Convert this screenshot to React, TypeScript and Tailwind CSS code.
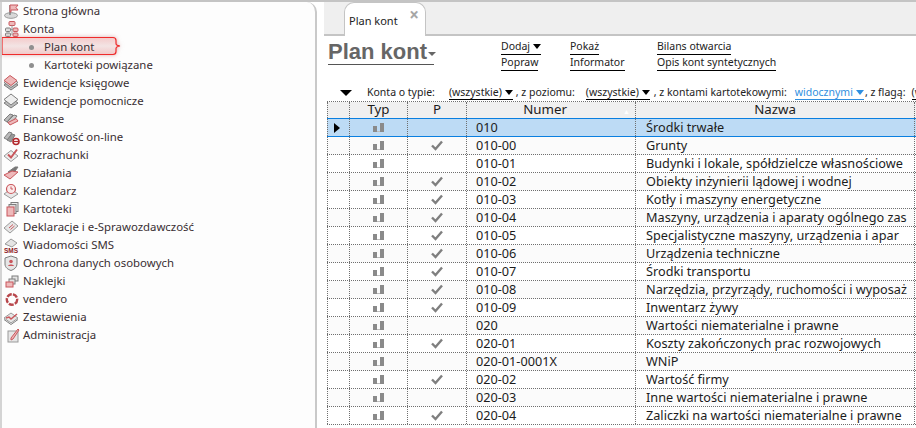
import type { ReactNode } from 'react'

const FONT = "font-['Noto_Sans','Open_Sans',sans-serif]"

function Svg({ children }: { children: ReactNode }) {
  return (
    <svg viewBox="0 0 18 18" className="h-[18px] w-[18px] shrink-0">
      {children}
    </svg>
  )
}

const G = '#9a9a9a'
const D = '#7d7d7d'
const R = '#c9575c'
const P = '#eeb9ba'

const icons: Record<string, ReactNode> = {
  home: (
    <Svg>
      <ellipse cx="9" cy="13.5" rx="6.5" ry="2.8" fill="#d8d8d8" stroke={G} />
      <path d="M8 13V3" stroke={D} strokeWidth="1.4" />
      <path d="M8 3h8l-2 2.5 2 2.5H9v2H8z" fill={P} stroke={R} />
    </Svg>
  ),
  accounts: (
    <Svg>
      <rect x="7" y="1.5" width="6" height="4" rx="1" fill={P} stroke={R} />
      <rect x="3.500" y="8" width="5" height="3.500" rx="1" fill="#ddd" stroke={D} />
      <rect x="3.500" y="13" width="5" height="3.500" rx="1" fill="#ddd" stroke={D} />
      <rect x="11" y="8" width="5" height="3.500" rx="1" fill={P} stroke={R} />
      <rect x="11" y="13" width="5" height="3.500" rx="1" fill={P} stroke={R} />
      <path d="M10 5.500V15M8.500 9.500H11" stroke={G} />
    </Svg>
  ),
  bookRed: (
    <Svg>
      <path d="M2 11l7-5 7 5-7 5z" fill="#bbb" stroke={D} />
      <path d="M2 8.500l7-5 7 5-7 5z" fill="#ddd" stroke={D} />
      <path d="M2 6.500l6-5 7 5-6 5z" fill={P} stroke={R} />
    </Svg>
  ),
  bookGray: (
    <Svg>
      <path d="M2 11l7-5 7 5-7 5z" fill="#bbb" stroke={D} />
      <path d="M2 7.500l7-5.500 7 5.500-7 5.500z" fill="#eee" stroke={D} />
    </Svg>
  ),
  money: (
    <Svg>
      <path d="M2 10l6-6 3 1-6 7z" fill="#bbb" stroke={D} />
      <path d="M5 12l7-7 3 1-6 8z" fill="#ccc" stroke={D} />
      <path d="M6 12.500l8-4 2 2.500-8 4z" fill={P} stroke={R} />
    </Svg>
  ),
  bank: (
    <Svg>
      <path d="M2 10l5-6 3 1-4 7z" fill="#bbb" stroke={D} />
      <path d="M5 12l5-6 3 1-4 7z" fill="#999" stroke={D} />
      <circle cx="14" cy="13.500" r="3" fill="none" stroke="#b3282d" strokeWidth="1.600" />
      <path d="M11.500 13.500h5" stroke="#b3282d" strokeWidth="1.200" />
    </Svg>
  ),
  settle: (
    <Svg>
      <path d="M2 10l7-5.500 7 5.500-7 5.500z" fill="#eee" stroke={G} />
      <path d="M6 8.500l3 3 6-8" fill="none" stroke={R} strokeWidth="2" />
    </Svg>
  ),
  actions: (
    <Svg>
      <path d="M6 8l7-5h3l-5 7z" fill="#777" stroke={D} />
      <path d="M2 11l8-4 6 1-8 7z" fill={P} stroke={R} />
    </Svg>
  ),
  calendar: (
    <Svg>
      <path d="M2 12l7-5 7 5-7 4.500z" fill="#e8e8e8" stroke={G} />
      <circle cx="9" cy="7" r="4.500" fill="#fbe9e9" stroke={R} strokeWidth="1.200" />
      <path d="M9 4.500V7h2" fill="none" stroke={R} />
    </Svg>
  ),
  cards: (
    <Svg>
      <rect x="9" y="2.500" width="7" height="9" fill="#eee" stroke={D} />
      <rect x="7" y="4.500" width="7" height="9" fill="#ddd" stroke={D} />
      <rect x="5" y="7" width="7" height="9" fill={P} stroke={R} />
    </Svg>
  ),
  declaration: (
    <Svg>
      <path d="M2 10l8-7 6 5-8 7z" fill="#e6e6e6" stroke={G} />
      <path d="M7 10l4-3.500M8.500 11.500l4-3.500" stroke={R} />
    </Svg>
  ),
  sms: (
    <Svg>
      <path d="M3 8l6-5 6 4-5 4z" fill="#e4e4e4" stroke={G} />
      <text x="9" y="16.500" textAnchor="middle" fontSize="6.500" fontWeight="700" fill="#8e2227" fontFamily="Liberation Sans">SMS</text>
    </Svg>
  ),
  shield: (
    <Svg>
      <path d="M9 2l6 2v6c0 3.500-3 5.500-6 6.500-3-1-6-3-6-6.500V4z" fill="#e6e6e6" stroke={D} />
      <circle cx="9" cy="7.500" r="1.800" fill={R} />
      <path d="M6 12c.5-2 5.500-2 6 0z" fill={R} />
    </Svg>
  ),
  labels: (
    <Svg>
      <rect x="10" y="4" width="6" height="5" fill="#e4e4e4" stroke={D} />
      <rect x="7" y="7" width="6" height="5" fill="#e4e4e4" stroke={D} />
      <rect x="4" y="10" width="7" height="5" fill={P} stroke={R} />
    </Svg>
  ),
  vendero: (
    <Svg>
      <circle cx="10" cy="9.500" r="5.200" fill="none" stroke="#b8474c" strokeWidth="2.400" strokeDasharray="5 1.200" />
    </Svg>
  ),
  report: (
    <Svg>
      <path d="M2 10l7-5 7 5-7 5z" fill="#e6e6e6" stroke={G} />
      <path d="M2 11.500l7 5 7-5" fill="none" stroke={D} />
      <path d="M4 10l3-1 2 2 6-5" fill="none" stroke={R} strokeWidth="1.500" />
    </Svg>
  ),
  admin: (
    <Svg>
      <rect x="6" y="5" width="10" height="11" fill="#e6e6e6" stroke={G} />
      <path d="M9 12l7-9 1 1-6 9-2 1z" fill={P} stroke={R} />
    </Svg>
  ),
}

const menu: { label: string; icon?: string; sub?: boolean; active?: boolean }[] = [
  { label: 'Strona główna', icon: 'home' },
  { label: 'Konta', icon: 'accounts' },
  { label: 'Plan kont', sub: true, active: true },
  { label: 'Kartoteki powiązane', sub: true },
  { label: 'Ewidencje księgowe', icon: 'bookRed' },
  { label: 'Ewidencje pomocnicze', icon: 'bookGray' },
  { label: 'Finanse', icon: 'money' },
  { label: 'Bankowość on-line', icon: 'bank' },
  { label: 'Rozrachunki', icon: 'settle' },
  { label: 'Działania', icon: 'actions' },
  { label: 'Kalendarz', icon: 'calendar' },
  { label: 'Kartoteki', icon: 'cards' },
  { label: 'Deklaracje i e-Sprawozdawczość', icon: 'declaration' },
  { label: 'Wiadomości SMS', icon: 'sms' },
  { label: 'Ochrona danych osobowych', icon: 'shield' },
  { label: 'Naklejki', icon: 'labels' },
  { label: 'vendero', icon: 'vendero' },
  { label: 'Zestawienia', icon: 'report' },
  { label: 'Administracja', icon: 'admin' },
]

const rows: [string, string, boolean][] = [
  ['010', 'Środki trwałe', false],
  ['010-00', 'Grunty', true],
  ['010-01', 'Budynki i lokale, spółdzielcze własnościowe', false],
  ['010-02', 'Obiekty inżynierii lądowej i wodnej', true],
  ['010-03', 'Kotły i maszyny energetyczne', true],
  ['010-04', 'Maszyny, urządzenia i aparaty ogólnego zas', true],
  ['010-05', 'Specjalistyczne maszyny, urządzenia i apar', true],
  ['010-06', 'Urządzenia techniczne', true],
  ['010-07', 'Środki transportu', true],
  ['010-08', 'Narzędzia, przyrządy, ruchomości i wyposaż', true],
  ['010-09', 'Inwentarz żywy', true],
  ['020', 'Wartości niematerialne i prawne', false],
  ['020-01', 'Koszty zakończonych prac rozwojowych', true],
  ['020-01-0001X', 'WNiP', false],
  ['020-02', 'Wartość firmy', true],
  ['020-03', 'Inne wartości niematerialne i prawne', false],
  ['020-04', 'Zaliczki na wartości niematerialne i prawne', true],
]

function MenuRow({ item }: { item: (typeof menu)[number] }) {
  if (item.sub) {
    return (
      <div className="relative flex h-[18px] items-center pl-[27px] text-[11.4px] text-[#3a2f33]">
        {item.active && (
          <svg viewBox="0 0 124 22" className="absolute left-0 top-[-3px] h-[22px] w-[124px] drop-shadow-[0_0_2px_rgba(200,120,120,0.6)]">
            <defs>
              <linearGradient id="glow" x1="0" x2="0" y1="0" y2="1">
                <stop offset="0" stopColor="#f4caca" />
                <stop offset="0.5" stopColor="#f3e4e4" />
                <stop offset="1" stopColor="#f2c8c8" />
              </linearGradient>
            </defs>
            <path d="M0 2.500H111q3 0 3 3v3q0 2 4 2.500q-4 .5-4 2.500v3q0 3-3 3H0z" fill="url(#glow)" stroke="#ef2b2b" strokeWidth="1.200" />
          </svg>
        )}
        <span className="relative h-[5px] w-[5px] rounded-full bg-[#8f8f8f]" />
        <span className="relative ml-[10px]">{item.label}</span>
      </div>
    )
  }
  return (
    <div className="flex h-[18px] items-center text-[11.4px] text-[#3a2f33]">
      <span className="flex w-[21px] shrink-0">{item.icon && icons[item.icon]}</span>
      <span>{item.label}</span>
    </div>
  )
}

function Drop({ blue }: { blue?: boolean }) {
  return (
    <span
      className={`ml-[3px] inline-block h-0 w-0 border-x-[4.5px] border-t-[5px] border-x-transparent ${
        blue ? 'border-t-[#2f8fe0]' : 'border-t-black'
      }`}
    />
  )
}

function Link({ children }: { children: ReactNode }) {
  return <span className="inline-flex h-[16px] items-center self-start border-b border-black text-[10.5px] leading-none text-[#222]">{children}</span>
}

function Bars() {
  return (
    <svg viewBox="0 0 11 9" className="h-[9px] w-[11px]">
      <rect x="0" y="3" width="4" height="6" fill="#8a8a8a" />
      <rect x="4" y="8" width="3" height="1" fill="#bdbdbd" />
      <rect x="7" y="0" width="4" height="9" fill="#8a8a8a" />
    </svg>
  )
}

function Check() {
  return (
    <svg viewBox="0 0 12 11" className="h-[11px] w-[12px]">
      <path d="M1 5.500l3.500 3.500L11 1.500" fill="none" stroke="#7f7f7f" strokeWidth="2.400" />
    </svg>
  )
}

const COLS = 'grid grid-cols-[22px_58px_59px_169px_279px_1fr]'
const CELL = 'flex items-center border-l border-dotted border-[#6f6f6f]'

export default function App() {
  return (
    <div className={`flex h-[428px] w-[916px] overflow-hidden border-t-2 border-[#c4c4c4] bg-white ${FONT}`}>
      <nav className="h-full w-[317px] shrink-0 rounded-tr-[10px] border-x-2 border-l-[#d4d4d4] border-r-[#c9c9c9] bg-[#fdfdfd]">
        {menu.map((item) => (
          <MenuRow key={item.label} item={item} />
        ))}
      </nav>

      <main className="ml-[7px] flex min-w-0 flex-1 flex-col">
        <div className="flex h-[34px] shrink-0 items-end border-b-2 border-[#c4c4c4] bg-[#efefef] pl-[20px]">
          <div className="-mb-[2px] flex h-[34px] w-[82px] items-center justify-between rounded-t-[10px] border-x border-t border-[#c4c4c4] bg-white pl-[4px] pr-[6px] text-[11px] text-[#222]">
            <span className="pt-[3px]">Plan kont</span>
            <span className="mb-[10px] text-[17px] font-bold leading-none text-[#a6a6a6]">×</span>
          </div>
        </div>

        <div className="flex h-[47px] shrink-0 pl-[4px] pt-[3px]">
          <div className="mt-[1px] flex h-[25px] w-[106px] items-center whitespace-nowrap border-b border-[#555] font-['Liberation_Sans'] text-[22px] font-bold leading-none text-[#666]">
            Plan kont
            <span className="ml-[1px] mt-[3px] h-0 w-0 border-x-[4px] border-t-[4px] border-x-transparent border-t-[#666]" />
          </div>
          <div className="ml-[67px] flex w-[69px] flex-col">
            <Link>Dodaj<Drop /></Link>
            <Link>Popraw</Link>
          </div>
          <div className="flex w-[87px] flex-col">
            <Link>Pokaż</Link>
            <Link>Informator</Link>
          </div>
          <div className="flex flex-col">
            <Link>Bilans otwarcia</Link>
            <Link>Opis kont syntetycznych</Link>
          </div>
        </div>

        <div className="flex h-[18px] shrink-0 items-center overflow-hidden whitespace-nowrap pl-[16px] pt-[2px] text-[10.5px] text-[#222]">
          <span className="h-0 w-0 border-x-[6.5px] border-t-[6px] border-x-transparent border-t-black" />
          <span className="ml-[15px]">Konta o typie:</span>
          <span className="ml-[14px] inline-flex items-center border-b border-black leading-[13px]">(wszystkie)<Drop /></span>
          <span className="ml-[3px]">, z poziomu:</span>
          <span className="ml-[11px] inline-flex items-center border-b border-black leading-[13px]">(wszystkie)<Drop /></span>
          <span className="ml-[4px]">, z kontami kartotekowymi:</span>
          <span className="ml-[8px] inline-flex items-center border-b border-[#2f8fe0] leading-[13px] text-[#2f8fe0]">widocznymi<Drop blue /></span>
          <span className="ml-[1px]">, z flagą:</span>
          <span className="ml-[6px] border-b border-black leading-[13px]">(wszystkie)</span>
        </div>

        <div className="ml-[3px] min-h-0 flex-1 overflow-hidden border-t border-dotted border-[#6f6f6f] text-[12.7px] leading-none text-[#1c1c1c]">
          <div className={`${COLS} h-[16px] bg-[#f0f0f0] text-[13.3px]`}>
            <div className="border-l border-dotted border-[#6f6f6f]" />
            <div className={`${CELL} justify-center`}>Typ</div>
            <div className={`${CELL} justify-center`}>P</div>
            <div className={`${CELL} relative justify-center pr-[12px]`}>
              Numer
              <span className="absolute right-[5px] top-[6px] text-[7px] text-white">▲</span>
            </div>
            <div className={`${CELL} justify-center`}>Nazwa</div>
            <div className={CELL} />
          </div>
          {rows.map(([num, name, checked], i) => (
            <div
              key={num}
              className={`${COLS} ${
                i === 0 ? 'h-[19px] border-y border-[#0a7fe0] bg-[#bddbf5]' : 'h-[18px] border-b border-dotted border-[#6f6f6f]'
              } ${i % 2 === 1 ? 'bg-[#fbfbfb]' : ''}`}
            >
              <div className="flex items-center border-l border-dotted border-[#6f6f6f] pl-[6px]">
                {i === 0 && <span className="h-0 w-0 border-y-[5px] border-l-[6px] border-y-transparent border-l-black" />}
              </div>
              <div className={`${CELL} justify-center`}><Bars /></div>
              <div className={`${CELL} justify-center`}>{checked && <Check />}</div>
              <div className={`${CELL} pl-[9px]`}>{num}</div>
              <div className={`${CELL} overflow-hidden whitespace-nowrap pl-[10px]`}>{name}</div>
              <div className={CELL} />
            </div>
          ))}
        </div>
      </main>
    </div>
  )
}
